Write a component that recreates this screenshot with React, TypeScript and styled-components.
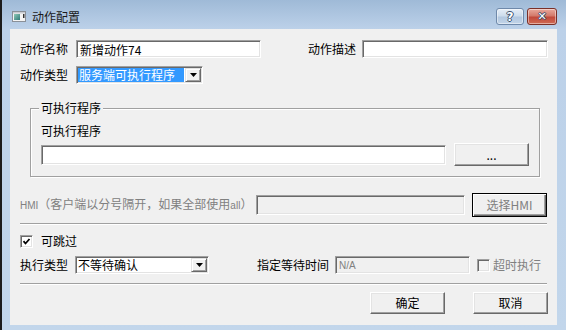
import React from "react";
import styled, { createGlobalStyle } from "styled-components";

const Global = createGlobalStyle`
  html, body { margin: 0; padding: 0; background: #c1d5ea; }
  body {
    font-family: "Noto Sans CJK SC", "Liberation Sans", sans-serif;
    font-size: 12px;
    color: #000;
  }
  * { box-sizing: border-box; }
`;

const Window = styled.div`
  width: 566px;
  height: 330px;
  border-left: 2px solid #1c1c1c;
  background: linear-gradient(to bottom, #9fbad7 0px, #bcd1e9 29px, #c2d6eb 100%);
  display: flex;
  flex-direction: column;
  overflow: hidden;
`;

const TitleBar = styled.div`
  height: 29px;
  flex: none;
  display: flex;
  align-items: center;
  padding: 4px 9px 0 10px;
`;

const TitleText = styled.span`
  margin-left: 6px;
  font-size: 12px;
  line-height: 14px;
  color: #1a1a1a;
`;

const CaptionButtons = styled.div`
  margin-left: auto;
  display: flex;
  gap: 3px;
`;

const CaptionButton = styled.div<{ $close?: boolean }>`
  width: ${(p) => (p.$close ? 30 : 28)}px;
  height: 17px;
  border-radius: 3px;
  border: 1px solid ${(p) => (p.$close ? "#7a3028" : "#6f89aa")};
  background: ${(p) =>
    p.$close
      ? "linear-gradient(to bottom, #e9a99c 0%, #d37a6b 45%, #c24a3b 55%, #cf6b55 100%)"
      : "linear-gradient(to bottom, #e6eef7 0%, #cddcec 45%, #b3c8e0 55%, #c2d4e8 100%)"};
  box-shadow: inset 0 0 0 1px rgba(255, 255, 255, 0.45);
  display: flex;
  align-items: center;
  justify-content: center;
  color: #fff;
  font-family: "DejaVu Sans", sans-serif;
  font-weight: bold;
  font-size: ${(p) => (p.$close ? 11 : 12)}px;
  line-height: 1;
  text-shadow: -1px 0 #3a4f6c, 1px 0 #3a4f6c, 0 -1px #3a4f6c, 0 1px #3a4f6c;
`;

const Client = styled.div`
  flex: 1;
  margin: 0 9px 5px 8px;
  background: #f0f0f0;
  padding: 11px 9px 0 10px;
  display: flex;
  flex-direction: column;
`;

const Row = styled.div<{ $h?: number; $mt?: number }>`
  display: flex;
  align-items: center;
  height: ${(p) => p.$h ?? 18}px;
  margin-top: ${(p) => p.$mt ?? 0}px;
`;

const Label = styled.span<{ $w?: number; $ml?: number; $disabled?: boolean }>`
  flex: none;
  width: ${(p) => (p.$w ? `${p.$w}px` : "auto")};
  margin-left: ${(p) => p.$ml ?? 0}px;
  line-height: 14px;
  white-space: nowrap;
  color: ${(p) => (p.$disabled ? "#808080" : "#000")};
`;

const SmallLatin = styled.span`
  font-family: "Liberation Sans", sans-serif;
  font-size: 10px;
`;

const Input = styled.div<{ $w?: number; $h?: number; $disabled?: boolean }>`
  flex: ${(p) => (p.$w ? "none" : "1")};
  width: ${(p) => (p.$w ? `${p.$w}px` : "auto")};
  height: ${(p) => p.$h ?? 18}px;
  border: 1px solid;
  border-color: #a0a0a0 #ffffff #ffffff #a0a0a0;
  box-shadow: inset 1px 1px 0 #696969, inset -1px -1px 0 #e3e3e3;
  background: ${(p) => (p.$disabled ? "#f0f0f0" : "#ffffff")};
  color: ${(p) => (p.$disabled ? "#808080" : "#000")};
  padding: 1px 3px 0;
  display: flex;
  align-items: center;
  line-height: 14px;
  white-space: nowrap;
  overflow: hidden;
`;

const Combo = styled.div<{ $w: number }>`
  flex: none;
  width: ${(p) => p.$w}px;
  height: 18px;
  border: 1px solid;
  border-color: #a0a0a0 #ffffff #ffffff #a0a0a0;
  box-shadow: inset 1px 1px 0 #696969, inset -1px -1px 0 #e3e3e3;
  background: #fff;
  padding: 1px;
  display: flex;
`;

const ComboText = styled.div<{ $selected?: boolean }>`
  flex: 1;
  margin-right: 1px;
  padding-left: 1px;
  line-height: 14px;
  white-space: nowrap;
  background: ${(p) => (p.$selected ? "#3399ff" : "transparent")};
  color: ${(p) => (p.$selected ? "#fff" : "#000")};
`;

const DropButton = styled.div`
  flex: none;
  width: 16px;
  height: 14px;
  background: #f0f0f0;
  border: 1px solid;
  border-color: #e3e3e3 #696969 #696969 #e3e3e3;
  box-shadow: inset 1px 1px 0 #fff, inset -1px -1px 0 #a0a0a0;
  display: flex;
  align-items: center;
  justify-content: center;
`;

const Button = styled.div<{ $w?: number; $h?: number; $ml?: number; $default?: boolean; $disabled?: boolean }>`
  flex: none;
  width: ${(p) => p.$w ?? 75}px;
  height: ${(p) => p.$h ?? 22}px;
  margin-left: ${(p) => p.$ml ?? 0}px;
  background: #f0f0f0;
  border: 1px solid;
  border-color: ${(p) => (p.$default ? "#000" : "#fff #696969 #696969 #fff")};
  box-shadow: ${(p) =>
    p.$default
      ? "inset 1px 1px 0 #fff, inset -1px -1px 0 #696969, inset -2px -2px 0 #a0a0a0"
      : "inset -1px -1px 0 #a0a0a0, inset 1px 1px 0 #e3e3e3"};
  display: flex;
  align-items: center;
  justify-content: center;
  line-height: 14px;
  color: ${(p) => (p.$disabled ? "#808080" : "#000")};
`;

const Group = styled.div`
  position: relative;
  margin: 24px 0 0 10px;
  width: 510px;
  border: 1px solid #a0a0a0;
  box-shadow: inset 1px 1px 0 #fff, 1px 1px 0 #fff;
  padding: 15px 10px 10px 10px;
  display: flex;
  flex-direction: column;
`;

const Legend = styled.span`
  position: absolute;
  top: -8px;
  left: 8px;
  padding: 0 2px;
  background: #f0f0f0;
  line-height: 14px;
`;

const Separator = styled.div<{ $mt: number }>`
  margin-top: ${(p) => p.$mt}px;
  width: 527px;
  height: 2px;
  border-top: 1px solid #a0a0a0;
  border-bottom: 1px solid #fff;
  flex: none;
`;

const CheckBox = styled.div<{ $disabled?: boolean; $ml?: number }>`
  flex: none;
  width: 13px;
  height: 13px;
  margin-left: ${(p) => p.$ml ?? 0}px;
  border: 1px solid;
  border-color: #a0a0a0 #fff #fff #a0a0a0;
  box-shadow: inset 1px 1px 0 #696969, inset -1px -1px 0 #e3e3e3;
  background: ${(p) => (p.$disabled ? "#f4f4f4" : "#fff")};
  display: flex;
  align-items: center;
  justify-content: center;
`;

const ButtonBar = styled.div`
  display: flex;
  justify-content: flex-end;
  gap: 28px;
  margin-top: 7px;
  height: 22px;
`;

const Arrow = () => (
  <svg width="7" height="4" viewBox="0 0 7 4">
    <polygon points="0,0 7,0 3.5,4" fill="#000" />
  </svg>
);

const Check = () => (
  <svg width="9" height="9" viewBox="0 0 9 9">
    <polyline points="1.5,4.2 3.5,6.5 7.5,2" fill="none" stroke="#000" strokeWidth="1.8" />
  </svg>
);

const WinIcon = () => (
  <svg width="14" height="11" viewBox="0 0 14 11">
    <rect x="0.5" y="0.5" width="13" height="10" fill="#f4f4f4" stroke="#8a9098" />
    <rect x="1" y="1" width="12" height="1.5" fill="#c9ccd1" />
    <defs>
      <linearGradient id="tg" x1="0" y1="0" x2="1" y2="1">
        <stop offset="0" stopColor="#8fc9b7" />
        <stop offset="1" stopColor="#2f7b78" />
      </linearGradient>
    </defs>
    <rect x="2" y="3" width="6" height="6" fill="url(#tg)" />
    <rect x="11" y="3" width="1.5" height="4" fill="#333" />
  </svg>
);

export default function App() {
  return (
    <>
      <Global />
      <Window>
        <TitleBar>
          <WinIcon />
          <TitleText>动作配置</TitleText>
          <CaptionButtons>
            <CaptionButton>?</CaptionButton>
            <CaptionButton $close>✕</CaptionButton>
          </CaptionButtons>
        </TitleBar>
        <Client>
          <Row>
            <Label $w={56}>动作名称</Label>
            <Input $w={185}>新增动作74</Input>
            <Label $w={54} $ml={47}>动作描述</Label>
            <Input $w={186} />
          </Row>
          <Row $mt={8}>
            <Label $w={56}>动作类型</Label>
            <Combo $w={127}>
              <ComboText $selected>服务端可执行程序</ComboText>
              <DropButton>
                <Arrow />
              </DropButton>
            </Combo>
          </Row>
          <Group>
            <Legend>可执行程序</Legend>
            <Label>可执行程序</Label>
            <Row $h={23} $mt={5}>
              <Input $h={20} />
              <Button $w={75} $h={23} $ml={8}>
                ...
              </Button>
            </Row>
          </Group>
          <Row $h={24} $mt={16}>
            <Label $w={236} $disabled>
              <SmallLatin>HMI</SmallLatin>（客户端以分号隔开，如果全部使用<SmallLatin>all</SmallLatin>）
            </Label>
            <Input $w={209} $h={20} $disabled />
            <Button $w={75} $h={24} $ml={7} $default $disabled>
              选择HMI
            </Button>
          </Row>
          <Separator $mt={6} />
          <Row $h={14} $mt={9}>
            <CheckBox>
              <Check />
            </CheckBox>
            <Label $ml={8}>可跳过</Label>
          </Row>
          <Row $mt={8}>
            <Label $w={55}>执行类型</Label>
            <Combo $w={134}>
              <ComboText>不等待确认</ComboText>
              <DropButton>
                <Arrow />
              </DropButton>
            </Combo>
            <Label $w={78} $ml={48}>指定等待时间</Label>
            <Input $w={135} $disabled>
              <SmallLatin>N/A</SmallLatin>
            </Input>
            <CheckBox $disabled $ml={7} />
            <Label $ml={3} $disabled>超时执行</Label>
          </Row>
          <Separator $mt={9} />
          <ButtonBar>
            <Button>确定</Button>
            <Button>取消</Button>
          </ButtonBar>
        </Client>
      </Window>
    </>
  );
}
